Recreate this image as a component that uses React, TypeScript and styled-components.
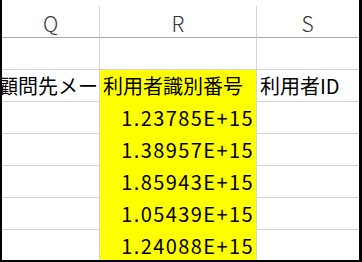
import React from 'react';
import styled, { createGlobalStyle } from 'styled-components';

const GlobalStyle = createGlobalStyle`
  html, body {
    margin: 0;
    padding: 0;
    background: #ffffff;
  }
`;

const Sheet = styled.div`
  box-sizing: border-box;
  width: 362px;
  height: 262px;
  padding-top: 6px;
  border-left: 2px solid #000;
  border-right: 3px solid #000;
  border-bottom: 2px solid #000;
  background: #fff;
  overflow: hidden;
  font-family: 'Noto Sans CJK JP', 'Noto Sans', sans-serif;
`;

const Grid = styled.div`
  display: grid;
  grid-template-columns: 98px 157px 102px;
  grid-auto-rows: 32px;
`;

const HeaderCell = styled.div<{ $last?: boolean }>`
  box-sizing: border-box;
  display: flex;
  align-items: center;
  justify-content: center;
  padding-top: 2px;
  border-right: 1px solid ${(p) => (p.$last ? 'transparent' : '#d4d4d4')};
  border-bottom: 1px solid #a8a8a8;
  font-size: 21px;
  font-weight: 300;
  color: #333;
`;

const Cell = styled.div<{ $fill?: boolean; $align?: 'left' | 'right'; $last?: boolean; $clipLeft?: boolean }>`
  box-sizing: border-box;
  display: flex;
  align-items: center;
  justify-content: ${(p) => (p.$align === 'right' || p.$clipLeft ? 'flex-end' : 'flex-start')};
  padding: ${(p) => (p.$align === 'right' ? '0 2px 1px 0' : p.$clipLeft ? '0 1px 1px 0' : '0 0 1px 3px')};
  overflow: hidden;
  white-space: nowrap;
  background: ${(p) => (p.$fill ? '#ffff00' : '#ffffff')};
  border-right: 1px solid ${(p) => (p.$last ? 'transparent' : '#d4d4d4')};
  border-bottom: 1px solid ${(p) => (p.$fill ? '#ffff00' : '#d4d4d4')};
  font-size: 20px;
  color: #000;
`;

const Num = styled.span`
  letter-spacing: 1.4px;
`;

const numbers = ['1.23785E+15', '1.38957E+15', '1.85943E+15', '1.05439E+15', '1.24088E+15'];

export default function App() {
  return (
    <>
      <GlobalStyle />
      <Sheet>
        <Grid>
          <HeaderCell>Q</HeaderCell>
          <HeaderCell>R</HeaderCell>
          <HeaderCell $last>S</HeaderCell>

          <Cell />
          <Cell />
          <Cell $last />

          <Cell $clipLeft>顧問先メー</Cell>
          <Cell $fill>利用者識別番号</Cell>
          <Cell $last>利用者ID</Cell>

          {numbers.map((n) => (
            <React.Fragment key={n}>
              <Cell />
              <Cell $fill $align="right">
                <Num>{n}</Num>
              </Cell>
              <Cell $last />
            </React.Fragment>
          ))}
        </Grid>
      </Sheet>
    </>
  );
}
